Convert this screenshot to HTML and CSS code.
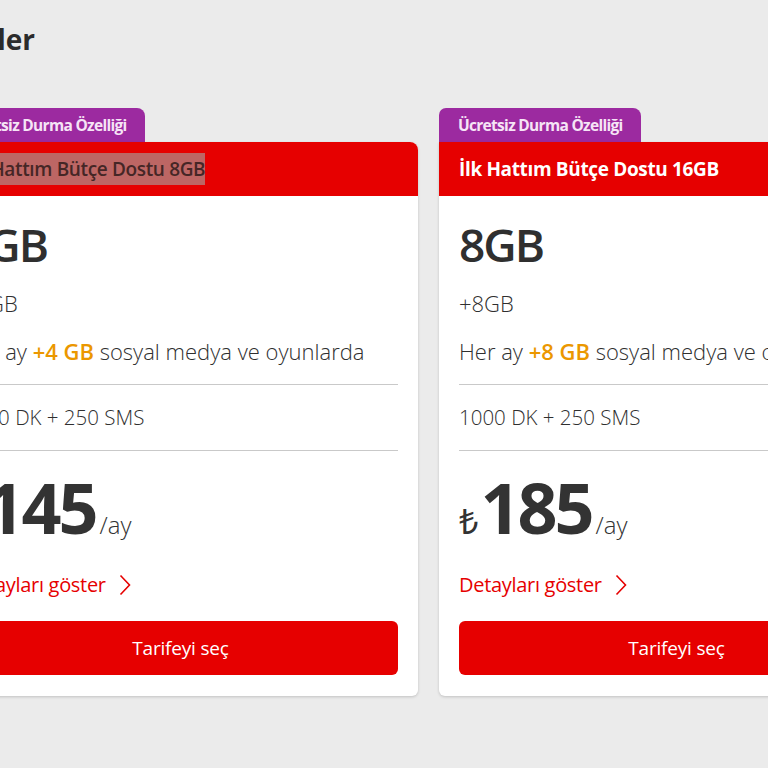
FILE: index.html
```html
<!DOCTYPE html>
<html lang="tr">
<head>
<meta charset="utf-8">
<title>Tarifeler</title>
<link rel="stylesheet" href="styles.css">
</head>
<body>
<div class="page">
  <div class="title-box"><h1 class="title">Tarifeler</h1></div>
  <div class="cards">
    <div class="card">
      <div class="tab">Ücretsiz Durma Özelliği</div>
      <div class="box">
        <div class="head">İlk <span class="sel">Hattım Bütçe Dostu 8GB</span></div>
        <div class="body">
          <div class="data">4GB</div>
          <div class="extra">+4GB</div>
          <div class="social">Her ay <b class="hl">+4 GB</b> sosyal medya ve oyunlarda</div>
          <div class="divider"></div>
          <div class="minutes">1000 DK + 250 SMS</div>
          <div class="divider"></div>
          <div class="price"><span class="cur">₺</span><span class="amount">145</span><span class="per">/ay</span></div>
          <div class="details">Detayları göster <svg class="chev" width="12" height="22" viewBox="0 0 12 22"><polyline points="1.5,1.5 10.5,11 1.5,20.5" fill="none" stroke="#e60000" stroke-width="1.6"/></svg></div>
          <div class="btn">Tarifeyi seç</div>
        </div>
      </div>
    </div>
    <div class="card">
      <div class="tab">Ücretsiz Durma Özelliği</div>
      <div class="box">
        <div class="head">İlk Hattım Bütçe Dostu 16GB</div>
        <div class="body">
          <div class="data">8GB</div>
          <div class="extra">+8GB</div>
          <div class="social">Her ay <b class="hl">+8 GB</b> sosyal medya ve oyunlarda</div>
          <div class="divider"></div>
          <div class="minutes">1000 DK + 250 SMS</div>
          <div class="divider"></div>
          <div class="price"><span class="cur">₺</span><span class="amount">185</span><span class="per">/ay</span></div>
          <div class="details">Detayları göster <svg class="chev" width="12" height="22" viewBox="0 0 12 22"><polyline points="1.5,1.5 10.5,11 1.5,20.5" fill="none" stroke="#e60000" stroke-width="1.6"/></svg></div>
          <div class="btn">Tarifeyi seç</div>
        </div>
      </div>
    </div>
  </div>
</div>
</body>
</html>
```
FILE: styles.css
```css
html, body {
  margin: 0;
  padding: 0;
  background: #ebebeb;
  overflow: hidden;
  height: 768px;
}
body {
  font-family: "Open Sans", "Noto Sans", sans-serif;
  color: #333;
}
.page {
  margin-left: -57px;
  padding-top: 21px;
  width: 1100px;
}
.title-box {
  width: 92px;
  display: flex;
  justify-content: flex-end;
}
.title {
  margin: 0;
  font-size: 28px;
  line-height: 36px;
  font-weight: 700;
  color: #2b2b2b;
  white-space: nowrap;
  flex-shrink: 0;
}
.cards {
  display: flex;
  gap: 21px;
  margin-top: 51px;
}
.card {
  width: 475px;
  flex-shrink: 0;
}
.tab {
  width: 202px;
  height: 34px;
  box-sizing: border-box;
  background: #9c2aa0;
  border-radius: 7px 8px 0 0;
  color: #f6e4f6;
  font-size: 15.5px;
  font-weight: 700;
  line-height: 34px;
  padding-left: 19px;
  letter-spacing: -0.7px;
  white-space: nowrap;
}
.box {
  background: #fff;
  border-radius: 0 8px 6px 6px;
  box-shadow: 0 1px 3px rgba(0,0,0,0.18);
  overflow: hidden;
}
.head {
  background: #e60000;
  height: 54px;
  line-height: 54px;
  padding: 0 20px;
  color: #fff;
  font-size: 19px;
  font-weight: 700;
  letter-spacing: -0.35px;
  white-space: nowrap;
}
.sel {
  background: #bd6664;
  color: #452626;
  font-weight: 600;
  padding: 3px 0;
}
.body {
  padding: 20px 20px 21px;
}
.data {
  font-size: 46px;
  line-height: 56px;
  font-weight: 600;
  letter-spacing: -2px;
  color: #2f2f2f;
}
.extra {
  margin-top: 17px;
  font-size: 22px;
  line-height: 28px;
  font-weight: 300;
  color: #2f2f2f;
}
.social {
  margin-top: 20px;
  font-size: 22px;
  line-height: 28px;
  font-weight: 300;
  color: #2f2f2f;
  white-space: nowrap;
}
.hl {
  color: #eb9700;
  font-weight: 600;
}
.divider {
  height: 0;
  border-top: 1px solid #c9c9c9;
  margin-top: 19px;
}
.minutes {
  margin-top: 19px;
  font-size: 20.5px;
  line-height: 26px;
  font-weight: 300;
  color: #2f2f2f;
}
.minutes + .divider {
  margin-top: 20px;
}
.price {
  margin-top: 21px;
  display: flex;
  align-items: baseline;
  line-height: 70px;
  height: 70px;
  color: #333;
}
.cur {
  font-family: "Noto Sans", sans-serif;
  font-size: 34px;
  font-weight: 400;
  margin-right: 2px;
}
.amount {
  font-size: 70px;
  font-weight: 700;
  letter-spacing: -3px;
}
.per {
  font-size: 24px;
  font-weight: 300;
  margin-left: 4px;
}
.details {
  margin-top: 30px;
  display: flex;
  align-items: center;
  gap: 13px;
  color: #e60000;
  font-size: 20px;
  line-height: 26px;
  font-weight: 400;
  letter-spacing: -0.3px;
}
.chev {
  display: block;
}
.btn {
  margin-top: 23px;
  height: 54px;
  background: #e60000;
  border-radius: 6px;
  color: #fff;
  font-size: 19px;
  line-height: 54px;
  text-align: center;
  letter-spacing: -0.2px;
}
```
